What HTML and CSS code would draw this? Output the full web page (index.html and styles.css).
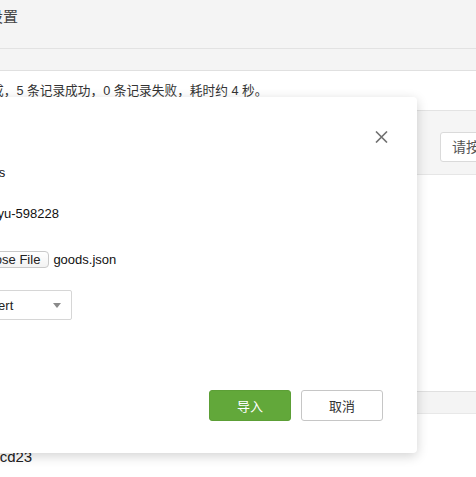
FILE: index.html
```html
<!DOCTYPE html>
<html lang="zh-CN">
<head>
<meta charset="utf-8">
<title>设置</title>
<link rel="stylesheet" href="styles.css">
</head>
<body>
<div class="page">
  <header class="topbar"><span class="tab">系统设置</span></header>
  <div class="subbar"></div>
  <p class="msg">导入完成，5 条记录成功，0 条记录失败，耗时约 4 秒。</p>
  <section class="panel">
    <div class="toolbar"><input class="search" type="text" placeholder="请按名称搜索"></div>
    <div class="panel-body"></div>
    <div class="thead"></div>
    <div class="trow">abcd23</div>
  </section>
</div>

<div class="modal">
  <div class="modal-head">
    <button class="close" type="button" aria-label="关闭">
      <svg width="13" height="12" viewBox="0 0 13 12"><path d="M1 0.5 L12 11.5 M12 0.5 L1 11.5" stroke="#707070" stroke-width="1.6" fill="none"/></svg>
    </button>
  </div>
  <div class="form">
    <span class="label">表名</span><span class="value">records</span>
    <span class="label">数据库</span><span class="value">zhangyu-598228</span>
    <span class="label">文件</span><span class="value file"><span class="file-btn">Choose File</span><span class="file-name">goods.json</span></span>
    <span class="label">模式</span><span class="value"><span class="select">Upsert<svg class="caret" width="8" height="5" viewBox="0 0 8 5"><path d="M0 0 H8 L4 5 Z" fill="#8a8a8a"/></svg></span></span>
  </div>
  <div class="modal-foot">
    <button class="btn btn-primary" type="button">导入</button>
    <button class="btn btn-default" type="button">取消</button>
  </div>
</div>
</body>
</html>
```

FILE: styles.css
```css
html, body {
  margin: 0;
  padding: 0;
}
body {
  width: 476px;
  height: 477px;
  overflow: hidden;
  position: relative;
  background: #fff;
  font-family: "Liberation Sans", "Noto Sans CJK SC", sans-serif;
  color: #333;
}
.page {
  margin-left: -60px;
  width: 600px;
}
.topbar {
  height: 48px;
  background: #f4f4f4;
  border-bottom: 1px solid #e2e2e2;
}
.tab {
  display: block;
  padding: 7px 0 0 18px;
  font-size: 15px;
  line-height: 20px;
  color: #444;
}
.subbar {
  height: 21px;
  background: #f4f4f4;
  border-bottom: 1px solid #e0e0e0;
}
.msg {
  margin: 0;
  height: 39px;
  line-height: 40px;
  padding-left: 13px;
  font-size: 12.7px;
  color: #333;
}
.panel {
  border-top: 1px solid #e3e3e3;
}
.toolbar {
  box-sizing: border-box;
  height: 64px;
  background: #f5f5f5;
  border-bottom: 1px solid #e6e6e6;
  padding: 21px 0 0 500px;
}
.search {
  box-sizing: border-box;
  width: 200px;
  height: 30px;
  border: 1px solid #dadada;
  border-radius: 3px;
  background: #fff;
  padding: 0 11px;
  font-family: "Liberation Sans", "Noto Sans CJK SC", sans-serif;
  font-size: 14px;
  outline: none;
}
.search::placeholder {
  color: #555;
}
.panel-body {
  height: 216px;
}
.thead {
  box-sizing: border-box;
  height: 23px;
  background: #f4f4f4;
  border-top: 1px solid #e0e0e0;
  border-bottom: 1px solid #e8e8e8;
}
.trow {
  padding: 33px 0 0 43px;
  font-size: 15px;
  line-height: 20px;
  color: #222;
}

/* modal */
.modal {
  position: absolute;
  top: 97px;
  left: -150px;
  width: 567px;
  background: #fff;
  border-radius: 4px;
  box-shadow: 0 3px 12px rgba(0, 0, 0, 0.18);
}
.modal-head {
  display: flex;
  justify-content: flex-end;
  padding: 34px 29px 0 0;
}
.close {
  display: block;
  width: 13px;
  height: 12px;
  padding: 0;
  margin: 0;
  border: 0;
  background: none;
}
.close svg {
  display: block;
}
.form {
  display: grid;
  grid-template-columns: 80px 1fr;
  grid-template-rows: 20px 30px 30px 30px;
  row-gap: 16px;
  align-items: center;
  padding-left: 32px;
  margin-top: 19px;
  font-size: 13px;
  color: #111;
}
.label {
  color: #333;
}
.value {
  display: flex;
  align-items: center;
}
.file {
  gap: 4px;
}
.file-btn {
  box-sizing: border-box;
  height: 17px;
  padding: 0 8px;
  border: 1px solid #c9c9c9;
  border-radius: 4px;
  background: linear-gradient(#fff, #f3f3f3);
  font-size: 13px;
  line-height: 15px;
  color: #222;
}
.file-name {
  color: #111;
}
.select {
  box-sizing: border-box;
  width: 110px;
  height: 30px;
  display: flex;
  align-items: center;
  justify-content: space-between;
  padding: 0 10px 0 12px;
  border: 1px solid #d6d6d6;
  border-radius: 2px;
  background: #fff;
  color: #222;
}
.caret {
  display: block;
}
.modal-foot {
  display: flex;
  justify-content: flex-end;
  gap: 10px;
  padding: 70px 34px 32px 0;
}
.btn {
  box-sizing: border-box;
  width: 82px;
  height: 31px;
  border-radius: 3px;
  font-family: "Liberation Sans", "Noto Sans CJK SC", sans-serif;
  font-size: 13px;
  padding: 0;
}
.btn-primary {
  background: #62a83a;
  border: 1px solid #5c9f36;
  color: #fff;
}
.btn-default {
  background: #fff;
  border: 1px solid #c6c6c6;
  color: #333;
}
```
